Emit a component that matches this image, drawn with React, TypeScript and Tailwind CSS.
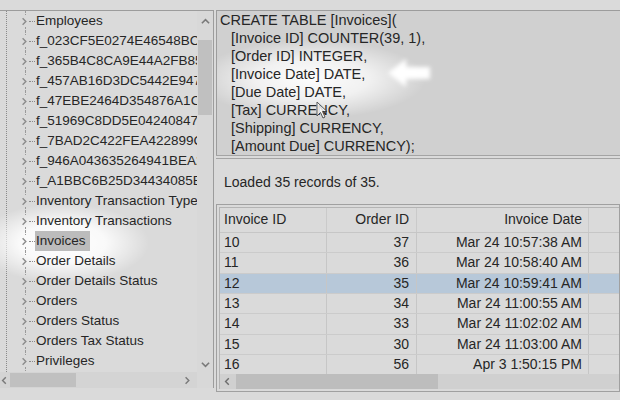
import type { ReactNode } from "react"

const treeItems = [
  "Employees",
  "f_023CF5E0274E46548BC6A3E1",
  "f_365B4C8CA9E44A2FB85D1C07",
  "f_457AB16D3DC5442E9471B2F0",
  "f_47EBE2464D354876A1C2E0B9",
  "f_51969C8DD5E042408477A1D3",
  "f_7BAD2C422FEA422899C0D4E1",
  "f_946A043635264941BEA2F7C8",
  "f_A1BBC6B25D34434085E0A9B2",
  "Inventory Transaction Types",
  "Inventory Transactions",
  "Invoices",
  "Order Details",
  "Order Details Status",
  "Orders",
  "Orders Status",
  "Orders Tax Status",
  "Privileges",
]

const sqlLines = [
  "[Invoice ID] COUNTER(39, 1),",
  "[Order ID] INTEGER,",
  "[Invoice Date] DATE,",
  "[Due Date] DATE,",
  "[Tax] CURRENCY,",
  "[Shipping] CURRENCY,",
  "[Amount Due] CURRENCY);",
]

const rows = [
  { id: "10", order: "37", date: "Mar 24 10:57:38 AM" },
  { id: "11", order: "36", date: "Mar 24 10:58:40 AM" },
  { id: "12", order: "35", date: "Mar 24 10:59:41 AM", selected: true },
  { id: "13", order: "34", date: "Mar 24 11:00:55 AM" },
  { id: "14", order: "33", date: "Mar 24 11:02:02 AM" },
  { id: "15", order: "30", date: "Mar 24 11:03:00 AM" },
  { id: "16", order: "56", date: "Apr 3 1:50:15 PM" },
]

function Chevron({ dir, className = "" }: { dir: "up" | "down" | "left" | "right"; className?: string }) {
  const pts = {
    right: "2,1 6,5 2,9",
    left: "6,1 2,5 6,9",
    up: "1,7 5,3 9,7",
    down: "1,3 5,7 9,3",
  }[dir]
  return (
    <svg width="10" height="10" viewBox="0 0 10 10" className={className}>
      <polyline points={pts} fill="none" stroke="currentColor" strokeWidth="1.8" />
    </svg>
  )
}

function Cell({ children, className = "" }: { children: ReactNode; className?: string }) {
  return <div className={`h-full flex items-center border-r border-[#c6c6c6] shrink-0 ${className}`}>{children}</div>
}

export default function App() {
  return (
    <div className="w-[620px] h-[400px] bg-[#dadada] relative overflow-hidden text-[#262626] font-['Liberation_Sans',Arial,sans-serif]">
      <div className="h-[10px]" />
      <div className="flex h-[382px]">
        {/* left tree panel */}
        <div className="w-[214px] h-[378px] flex flex-col border-t border-r border-[#9c9c9c]">
          <div className="flex h-[361px]">
            <div className="relative w-[197px] overflow-hidden">
              <div className="absolute left-[6px] top-0 bottom-0 border-l border-dotted border-[#8a8a8a]" />
              {/* spotlight behind Invoices */}
              <div className="absolute left-[-25px] top-[192px] w-[175px] h-[80px] rounded-full bg-[radial-gradient(ellipse_at_center,rgba(255,255,255,1)_0%,rgba(255,255,255,0.85)_35%,rgba(255,255,255,0)_70%)]" />
              {treeItems.map((t) => (
                <div key={t} className="relative h-[20px] flex items-center whitespace-nowrap">
                  <div className="absolute left-[25px] top-0 h-[4px] border-l border-dotted border-[#9a9a9a]" />
                  <div className="absolute left-[25px] bottom-0 h-[4px] border-l border-dotted border-[#9a9a9a]" />
                  <div className="w-[21px] shrink-0" />
                  <div className="w-[8px] flex items-center justify-center text-[#8c8c8c] shrink-0">
                    <Chevron dir="right" className="w-[8px] h-[9px]" />
                  </div>
                  <div className="w-[6px] border-t border-dotted border-[#8a8a8a] shrink-0" />
                  <span
                    className={`text-[13.5px] leading-[20px] px-[1px] ${t === "Invoices" ? "bg-[#bcbcbc] pr-[4px]" : ""}`}
                  >
                    {t}
                  </span>
                </div>
              ))}
            </div>
            <div className="w-[16px] flex flex-col bg-[#d8d8d8]">
              <div className="h-[20px] flex items-center justify-center text-[#7a7a7a]">
                <Chevron dir="up" className="w-[9px] h-[9px]" />
              </div>
              <div className="h-[9px]" />
              <div className="h-[75px] mx-[1px] bg-[#c0c0c0]" />
              <div className="flex-1" />
              <div className="h-[16px] flex items-center justify-center text-[#7a7a7a]">
                <Chevron dir="down" className="w-[9px] h-[9px]" />
              </div>
            </div>
          </div>
          <div className="flex h-[16px]">
            <div className="w-[197px] flex items-center bg-[#d4d4d4]">
              <div className="w-[10px] flex items-center justify-center text-[#7a7a7a]">
                <Chevron dir="left" className="w-[8px] h-[9px]" />
              </div>
              <div className="w-[66px] h-[14px] bg-[#c0c0c0]" />
              <div className="flex-1" />
              <div className="w-[18px] flex items-center justify-center text-[#7a7a7a]">
                <Chevron dir="right" className="w-[8px] h-[9px]" />
              </div>
            </div>
            <div className="flex-1 bg-[#d8d8d8]" />
          </div>
        </div>

        <div className="w-[2px]" />

        {/* right panel */}
        <div className="flex-1 flex flex-col">
          <div className="relative h-[145px] bg-[#d0d0d0] border-t border-l border-[#9c9c9c] pl-[3px] text-[14.5px] leading-[18px] whitespace-nowrap overflow-hidden">
            <div className="absolute left-[-20px] top-[28px] w-[230px] h-[80px] rounded-full bg-[radial-gradient(ellipse_at_center,rgba(255,255,255,0.95)_0%,rgba(255,255,255,0.7)_35%,rgba(255,255,255,0)_70%)]" />
            <div className="relative">
              <div>CREATE TABLE [Invoices](</div>
              {sqlLines.map((l) => (
                <div key={l} className="pl-[11px]">
                  {l}
                </div>
              ))}
            </div>
          </div>
          <div className="h-[4px] border-t border-b border-[#a4a4a4] bg-[#dadada]" />
          <div className="h-[45px] pl-[8px] pt-[13px] text-[14px] leading-[20px]">Loaded 35 records of 35.</div>
          <div className="h-[188px] border border-[#a0a0a0] p-[2px] pr-0">
            <div className="h-full border-l border-t border-[#b4b4b4] flex flex-col">
              <div className="h-[25px] flex text-[14px] border-b border-[#c6c6c6]">
                <Cell className="w-[107px] pl-[4px] border-[#cacaca]">Invoice ID</Cell>
                <Cell className="w-[90px] justify-end pr-[7px] border-[#cacaca]">Order ID</Cell>
                <Cell className="w-[172px] justify-end pr-[6px] border-[#cacaca]">Invoice Date</Cell>
                <div className="flex-1" />
              </div>
              <div className="h-[143px] overflow-hidden">
                {rows.map((r) => (
                  <div
                    key={r.id}
                    className={`h-[20.4px] flex text-[14px] border-b border-[#cbcbcb] ${r.selected ? "bg-[#b7c8d9]" : ""}`}
                  >
                    <Cell className="w-[107px] pl-[4px]">{r.id}</Cell>
                    <Cell className="w-[90px] justify-end pr-[7px]">{r.order}</Cell>
                    <Cell className="w-[172px] justify-end pr-[6px]">{r.date}</Cell>
                    <div className="flex-1" />
                  </div>
                ))}
              </div>
              <div className="h-[15px] flex items-center bg-[#d0d0d0]">
                <div className="w-[16px] flex items-center justify-center text-[#6e6e6e]">
                  <Chevron dir="left" className="w-[8px] h-[9px]" />
                </div>
                <div className="w-[202px] h-[15px] bg-[#bdbdbd]" />
              </div>
            </div>
          </div>
        </div>
      </div>

      {/* pointer annotations */}
      <svg className="absolute left-[378px] top-[50px] pointer-events-none" width="64" height="46" viewBox="0 0 64 46">
        <defs>
          <filter id="blur" x="-30%" y="-30%" width="160%" height="160%">
            <feGaussianBlur stdDeviation="2.2" />
          </filter>
        </defs>
        <polygon points="10,23 28,9 28,17 52,17 52,29 28,29 28,37" fill="white" filter="url(#blur)" />
      </svg>
      <svg className="absolute left-[316px] top-[101px] pointer-events-none opacity-80" width="12" height="19" viewBox="0 0 12 19">
        <polygon points="1,1 1,15 4.5,11.5 7,17 9,16 6.5,10.5 11,10.5" fill="white" stroke="#333" strokeWidth="1" />
      </svg>
    </div>
  )
}
